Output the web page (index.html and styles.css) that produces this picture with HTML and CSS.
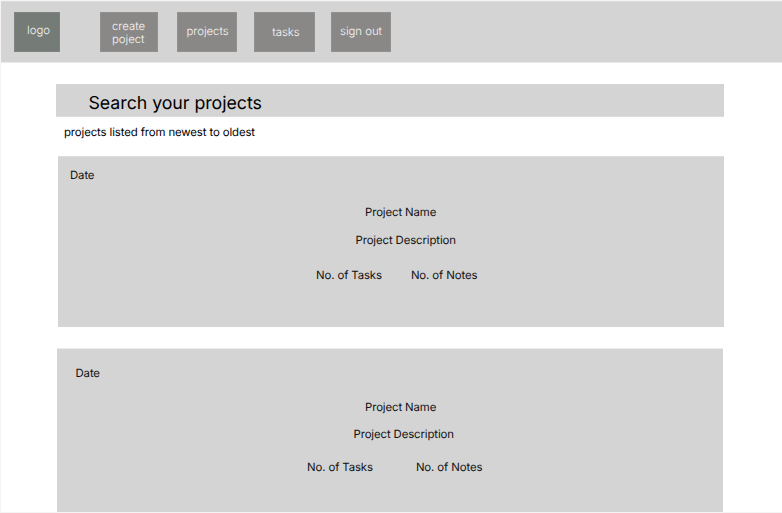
FILE: index.html
```html
<!DOCTYPE html>
<html lang="en">
<head>
<meta charset="utf-8">
<title>Projects</title>
<link rel="stylesheet" href="styles.css">
</head>
<body>
<div class="page">
  <header class="topbar">
    <a class="logo"><span>logo</span></a>
    <nav class="nav">
      <a class="nav-item create"><span>create<br>poject</span></a>
      <a class="nav-item projects"><span>projects</span></a>
      <a class="nav-item tasks"><span>tasks</span></a>
      <a class="nav-item signout"><span>sign out</span></a>
    </nav>
  </header>
  <main class="content">
    <div class="search"><span>Search your projects</span></div>
    <p class="hint"><span>projects listed from newest to oldest</span></p>
    <article class="card first">
      <p class="date"><span>Date</span></p>
      <h2 class="name"><span>Project Name</span></h2>
      <p class="description"><span>Project Description</span></p>
      <div class="counts"><span>No. of Tasks</span><span>No. of Notes</span></div>
    </article>
    <article class="card second">
      <p class="date"><span>Date</span></p>
      <h2 class="name"><span>Project Name</span></h2>
      <p class="description"><span>Project Description</span></p>
      <div class="counts"><span>No. of Tasks</span><span>No. of Notes</span></div>
    </article>
  </main>
</div>
</body>
</html>
```
FILE: styles.css
```css
* { box-sizing: border-box; }
body {
  margin: 0;
  background: #fff;
  color: #111;
  font: 400 11.4px/14px Inter, "Liberation Sans", sans-serif;
  letter-spacing: -0.12px;
  text-rendering: geometricPrecision;
}
h2, p { margin: 0; font-size: inherit; font-weight: 400; }
.page {
  height: 513px;
  overflow: hidden;
  border: solid #f4f4f4;
  border-width: 1px 0 1px 1px;
}
.topbar {
  display: flex;
  height: 62px;
  padding: 10px 0 0 13px;
  background: #d4d4d4;
  border-top: 1px solid #dcdcdc;
  border-bottom: 1px solid #ebebeb;
  color: #f6f6f6;
  font-weight: 350;
  letter-spacing: -0.03px;
  line-height: 13px;
}
.logo, .nav-item {
  display: flex;
  height: 40px;
  justify-content: center;
  border: 1px solid #92918f;
  background: #8a8886;
}
.logo { width: 46px; padding: 11px 0 0 3px; background: #757b76; border-color: #7d837e; }
.nav { display: flex; margin-left: 40px; }
.create { width: 58px; margin-right: 19px; padding: 7px 1px 0 0; }
.projects { width: 60px; margin-right: 17px; padding: 12px 0 0 1px; }
.tasks { width: 61px; margin-right: 16px; padding: 13px 0 0 3px; }
.signout { width: 60px; padding-top: 12px; }
.content { padding: 21px 0 0 55px; }
.search {
  width: 668px;
  height: 33px;
  padding: 9px 0 0 32.5px;
  background: #d4d4d4;
  border-bottom: 1px solid #dcdcdc;
  color: #000;
  font-size: 17.8px;
  letter-spacing: -0.05px;
  line-height: 22px;
}
.hint { height: 39px; padding: 8px 0 0 8px; color: #000; }
.card {
  display: flex;
  flex-direction: column;
  width: 666px;
  background: #d4d4d4;
  border-top: 1px solid #dcdcdc;
}
.first { height: 171px; margin-left: 2px; padding-top: 11px; }
.second { height: 164px; margin: 21px 0 0 1px; padding-top: 17px; border-top-color: #ebebeb; }
.first .date { padding-left: 12px; }
.second .date { padding-left: 18.5px; }
.first .name { margin-top: 23px; padding-left: 307px; }
.second .name { margin-top: 20px; padding-left: 308px; }
.first .description { margin-top: 14px; padding-left: 297.5px; }
.second .description { margin-top: 13px; padding-left: 296.5px; }
.counts { display: flex; }
.first .counts { margin-top: 21px; padding-left: 258px; gap: 29px; }
.second .counts { margin-top: 19px; padding-left: 250px; gap: 43px; }
```
